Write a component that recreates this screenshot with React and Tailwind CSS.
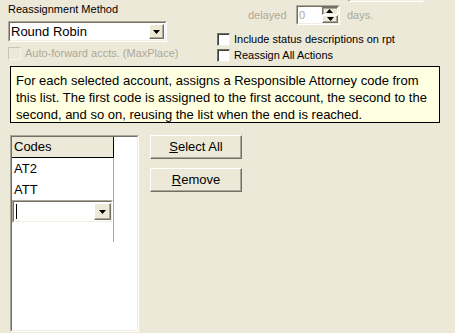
import React from 'react';

// ─── Small XP-style controls ─────────────────────────────────────────────────

function DropArrow({ className = '' }) {
  return (
    <svg className={className} width="7" height="4" viewBox="0 0 7 4">
      <path d="M0 0h7L3.5 4z" fill="#000" />
    </svg>
  );
}

function DropButton({ className = '' }) {
  return (
    <div
      className={`flex items-center justify-center bg-[#ECE9D8] border border-t-white border-l-white border-b-[#716F64] border-r-[#716F64] shadow-[inset_-1px_-1px_0_#ACA899] ${className}`}
    >
      <DropArrow />
    </div>
  );
}

function Sunken({ className = '', children }) {
  return (
    <div className={`border border-t-[#ACA899] border-l-[#ACA899] border-b-white border-r-white ${className}`}>
      <div className="h-full w-full border border-t-[#716F64] border-l-[#716F64] border-b-[#F1EFE2] border-r-[#F1EFE2] bg-white">
        {children}
      </div>
    </div>
  );
}

function Checkbox({ label, disabled }) {
  return (
    <div className="flex items-center h-[16px]">
      <span
        className={`w-[13px] h-[13px] border shrink-0 ${
          disabled
            ? 'bg-[#ECE9D8] border-t-[#C7C4B6] border-l-[#C7C4B6] border-b-[#F4F3EC] border-r-[#F4F3EC]'
            : 'bg-white border-t-[#716F64] border-l-[#716F64] border-b-[#F1EFE2] border-r-[#F1EFE2] shadow-[inset_1px_1px_0_#404040]'
        }`}
      />
      <span className={`ml-[4px] text-[11px] leading-[13px] whitespace-nowrap ${disabled ? 'text-[#ACA899]' : 'text-black'}`}>
        {label}
      </span>
    </div>
  );
}

function PushButton({ children }) {
  return (
    <button className="w-[92px] h-[24px] bg-[#ECE9D8] border border-t-white border-l-white border-b-[#716F64] border-r-[#716F64] shadow-[inset_-1px_-1px_0_#ACA899] text-[13px] leading-[20px] text-black">
      {children}
    </button>
  );
}

// ─── Page ────────────────────────────────────────────────────────────────────

export default function App() {
  return (
    <div
      className="w-[455px] h-[333px] bg-[#ECE9D8] overflow-hidden"
      style={{ fontFamily: '"Liberation Sans", Arial, sans-serif' }}
    >
      {/* Top options */}
      <div className="flex h-[66px]">
        <div className="ml-[8px] w-[159px]">
          <div className="h-[21px] pt-[2px] text-[11px] leading-[14px] text-black whitespace-nowrap">
            Reassignment Method
          </div>
          <Sunken className="h-[21px] w-[159px]">
            <div className="flex items-center h-full">
              <span className="flex-1 pl-[1px] text-[13px] leading-[17px] text-black">Round Robin</span>
              <DropButton className="w-[15px] h-[15px] mr-[1px]" />
            </div>
          </Sunken>
          <div className="mt-[3px]">
            <Checkbox label="Auto-forward accts. (MaxPlace)" disabled />
          </div>
        </div>

        <div className="ml-[50px] flex flex-col">
          {/* cut-off combo from the section above */}
          <Sunken className="mt-[-19px] ml-[131px] h-[21px] w-[75px]">
            <div className="flex justify-end items-center h-full">
              <DropButton className="w-[17px] h-[17px]" />
            </div>
          </Sunken>

          <div className="mt-[3px] flex items-center h-[20px]">
            <span className="ml-[31px] w-[48px] text-[11px] text-[#ACA899]">delayed</span>
            <Sunken className="h-[20px] w-[44px]">
              <div className="flex h-full items-center">
                <span className="flex-1 pl-[1px] text-[11px] leading-[14px] text-[#ACA899]">0</span>
                <div className="flex flex-col w-[16px] h-[16px]">
                  <DropButton className="h-[8px] w-full rotate-180" />
                  <DropButton className="h-[8px] w-full" />
                </div>
              </div>
            </Sunken>
            <span className="ml-[7px] text-[11px] text-[#ACA899]">days.</span>
          </div>

          <div className="mt-[6px]">
            <Checkbox label="Include status descriptions on rpt" />
            <Checkbox label="Reassign All Actions" />
          </div>
        </div>
      </div>

      {/* Explanation note */}
      <div className="ml-[10px] w-[430px] h-[57px] border border-black bg-[#FFFFE1] pl-[5px] pt-[5px] text-[13px] leading-[17px] text-black">
        <div className="whitespace-nowrap">For each selected account, assigns a Responsible Attorney code from</div>
        <div className="whitespace-nowrap">this list. The first code is assigned to the first account, the second to the</div>
        <div className="whitespace-nowrap">second, and so on, reusing the list when the end is reached.</div>
      </div>

      {/* Codes list + actions */}
      <div className="mt-[12px] flex">
        <Sunken className="ml-[10px] w-[129px] h-[197px]">
          <div className="w-[102px]">
            <div className="h-[21px] bg-[#ECE9D8] border-r border-b border-black pl-[2px] text-[13px] leading-[20px] text-black">
              Codes
            </div>
            <div className="h-[84px] border-r border-[#ACA899]">
              <div className="h-[21px] pl-[2px] text-[13px] leading-[21px] text-black">AT2</div>
              <div className="h-[21px] pl-[2px] text-[13px] leading-[21px] text-black">ATT</div>
              <Sunken className="h-[23px] w-[101px]">
                <div className="flex items-center h-full">
                  <span className="ml-[2px] w-[1px] h-[15px] bg-black" />
                  <span className="flex-1" />
                  <DropButton className="w-[17px] h-[17px]" />
                </div>
              </Sunken>
            </div>
          </div>
        </Sunken>

        <div className="ml-[11px] flex flex-col gap-[9px]">
          <PushButton>
            <span className="underline">S</span>elect All
          </PushButton>
          <PushButton>
            <span className="underline">R</span>emove
          </PushButton>
        </div>
      </div>
    </div>
  );
}
